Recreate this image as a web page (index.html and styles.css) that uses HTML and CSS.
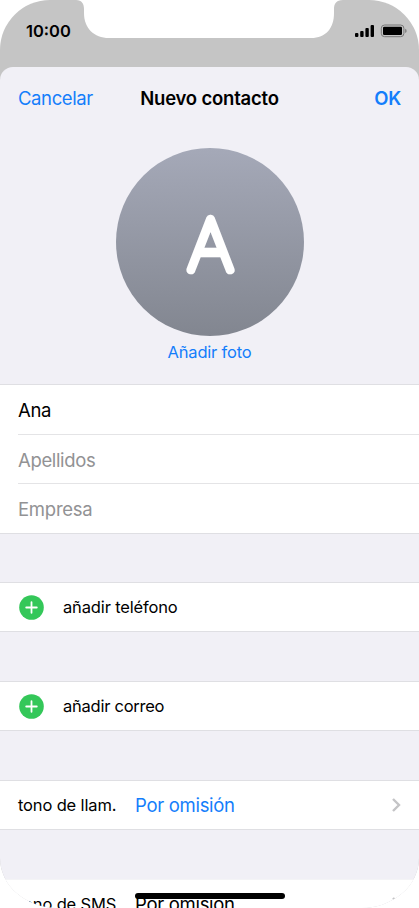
FILE: index.html
```html
<!DOCTYPE html>
<html lang="es">
<head>
<meta charset="utf-8">
<title>Nuevo contacto</title>
<link rel="stylesheet" href="styles.css">
</head>
<body>
<main class="phone">
  <header class="status">
    <svg class="notch" viewBox="0 0 267 39" aria-hidden="true"><path d="M0 0C6 0 8 4 8 9V13C8 28 18 38 33 38H235C250 38 258 28 258 13V9C258 4 260 0 267 0Z"/></svg>
    <span class="time">10:00</span>
    <svg class="indicators" viewBox="0 0 54 14" aria-hidden="true">
      <rect x="1" y="9" width="3.4" height="4" rx="1"/><rect x="6.2" y="7" width="3.4" height="6" rx="1"/><rect x="11.4" y="4" width="3.4" height="9" rx="1"/><rect x="16.6" y="1" width="3.4" height="12" rx="1"/>
      <rect class="battery" x="27.3" y="1" width="22.6" height="11.7" rx="3.3"/><rect x="29" y="2.8" width="19" height="8.2" rx="1.3"/><path class="tip" d="M51.2 4.8q1.4.6 1.4 2.1t-1.4 2.1z"/>
    </svg>
  </header>
  <section class="sheet">
    <nav class="bar">
      <a class="cancel">Cancelar</a><h1>Nuevo contacto</h1><a class="ok">OK</a>
    </nav>
    <div class="photo">
      <svg class="avatar" viewBox="0 0 188 188">
        <defs><linearGradient id="shade" x1="0" y1="0" x2="0" y2="1"><stop class="light" offset="0"/><stop class="dark" offset="1"/></linearGradient></defs>
        <circle cx="94" cy="94" r="94" fill="url(#shade)"/>
        <text class="initial" x="94.6" y="121.6" textLength="43" lengthAdjust="spacingAndGlyphs">A</text>
      </svg>
      <a>Añadir foto</a>
    </div>
    <div class="group names">
      <div class="field">Ana</div>
      <div class="field empty surname">Apellidos</div>
      <div class="field empty company">Empresa</div>
    </div>
    <div class="group row">
      <svg class="plus" viewBox="0 0 25 25"><circle cx="12.5" cy="12.5" r="12.3"/><path d="M12.5 7.2v10.6M7.2 12.5h10.6"/></svg>
      <span class="phone-label">añadir teléfono</span>
    </div>
    <div class="group row">
      <svg class="plus" viewBox="0 0 25 25"><circle cx="12.5" cy="12.5" r="12.3"/><path d="M12.5 7.2v10.6M7.2 12.5h10.6"/></svg>
      <span class="mail-label">añadir correo</span>
    </div>
    <div class="group row tone">
      <span class="tone-label">tono de llam.</span><span class="value">Por omisión</span>
      <svg class="chevron" viewBox="0 0 10 16"><path d="M2 2l6 6-6 6"/></svg>
    </div>
    <div class="group row tone last">
      <span class="tone-label">tono de SMS</span><span class="value">Por omisión</span>
      <svg class="chevron" viewBox="0 0 10 16"><path d="M2 2l6 6-6 6"/></svg>
    </div>
  </section>
  <div class="home"></div>
</main>
</body>
</html>
```
FILE: styles.css
```css
* { box-sizing: border-box; }
html, body { margin: 0; background: #fff; overflow: hidden; }
body { font-family: Inter, "Liberation Sans", sans-serif; color: #000; }
.phone { position: relative; width: 419px; height: 908px; overflow: hidden; border-radius: 50px 50px 58px 58px / 50px; background: #c5c5c5; }
.status { position: relative; height: 67px; padding: 23px 11px 0 26px; display: flex; justify-content: space-between; }
.notch { position: absolute; left: 76px; top: 0; width: 267px; height: 39px; fill: #fff; }
.time { font-size: 16.5px; line-height: 16px; font-weight: 600; letter-spacing: 0; }
.indicators { width: 54px; height: 14px; margin-top: 1px; }
.battery { fill: none; stroke: #777; stroke-width: 1; }
.tip { fill: #777; }
.sheet { height: 841px; background: #f1f0f6; border-radius: 13px 13px 0 0; overflow: hidden; }
a { color: #147efb; }
.bar { height: 63px; padding: 0 18px 2px; display: grid; grid-template-columns: 1fr auto 1fr; align-items: center; font-size: 18.5px; white-space: nowrap; }
.cancel { letter-spacing: -.4px; }
h1 { margin: 0; font-size: 18.5px; font-weight: 600; letter-spacing: -.2px; }
.ok { justify-self: end; font-weight: 600; letter-spacing: -.3px; }
.photo { height: 254px; padding-top: 17.5px; display: flex; flex-direction: column; align-items: center; }
.photo a { margin-top: 6.5px; font-size: 16.5px; line-height: 20px; letter-spacing: -.2px; }
.avatar { width: 188px; height: 188px; display: block; }
.light { stop-color: #a5a9b8; }
.dark { stop-color: #828690; }
.initial { fill: #fff; stroke: #fff; stroke-width: 8.6px; stroke-linejoin: round; font-family: Lato, Inter, sans-serif; font-size: 72px; font-weight: 100; text-anchor: middle; }
.group { background: #fff; border-top: 1px solid #dfdfe3; border-bottom: 1px solid #dfdfe3; margin-bottom: 49px; }
.names { height: 150px; padding-left: 18px; margin-bottom: 48px; }
.field { height: 49px; line-height: 50px; font-size: 18.5px; letter-spacing: -.35px; }
.field + .field { border-top: 1px solid #e4e4e6; line-height: 50px; }
.company { letter-spacing: -.25px; }
.empty { color: #929294; }
.row { height: 50px; padding-left: 18.5px; display: flex; align-items: center; font-size: 16.5px; letter-spacing: -.15px; white-space: nowrap; }
.plus { width: 25px; height: 25px; margin-right: 19.5px; }
.plus circle { fill: #34c759; }
.plus path { stroke: #fff; stroke-width: 1.8; stroke-linecap: round; }
.mail-label { letter-spacing: -.25px; }
.tone { padding-left: 18px; }
.tone-label { width: 117px; }
.value { color: #147efb; font-size: 18.5px; letter-spacing: -.3px; }
.chevron { width: 10px; height: 16px; margin-left: auto; margin-right: 18px; fill: none; stroke: #c4c4c6; stroke-width: 2.4; }
.last { border-top-color: #f4f4f6; }
.last .value { color: #000; }
.home { position: absolute; left: 135px; top: 893px; width: 150px; height: 6px; border-radius: 3px; background: #000; }
```
